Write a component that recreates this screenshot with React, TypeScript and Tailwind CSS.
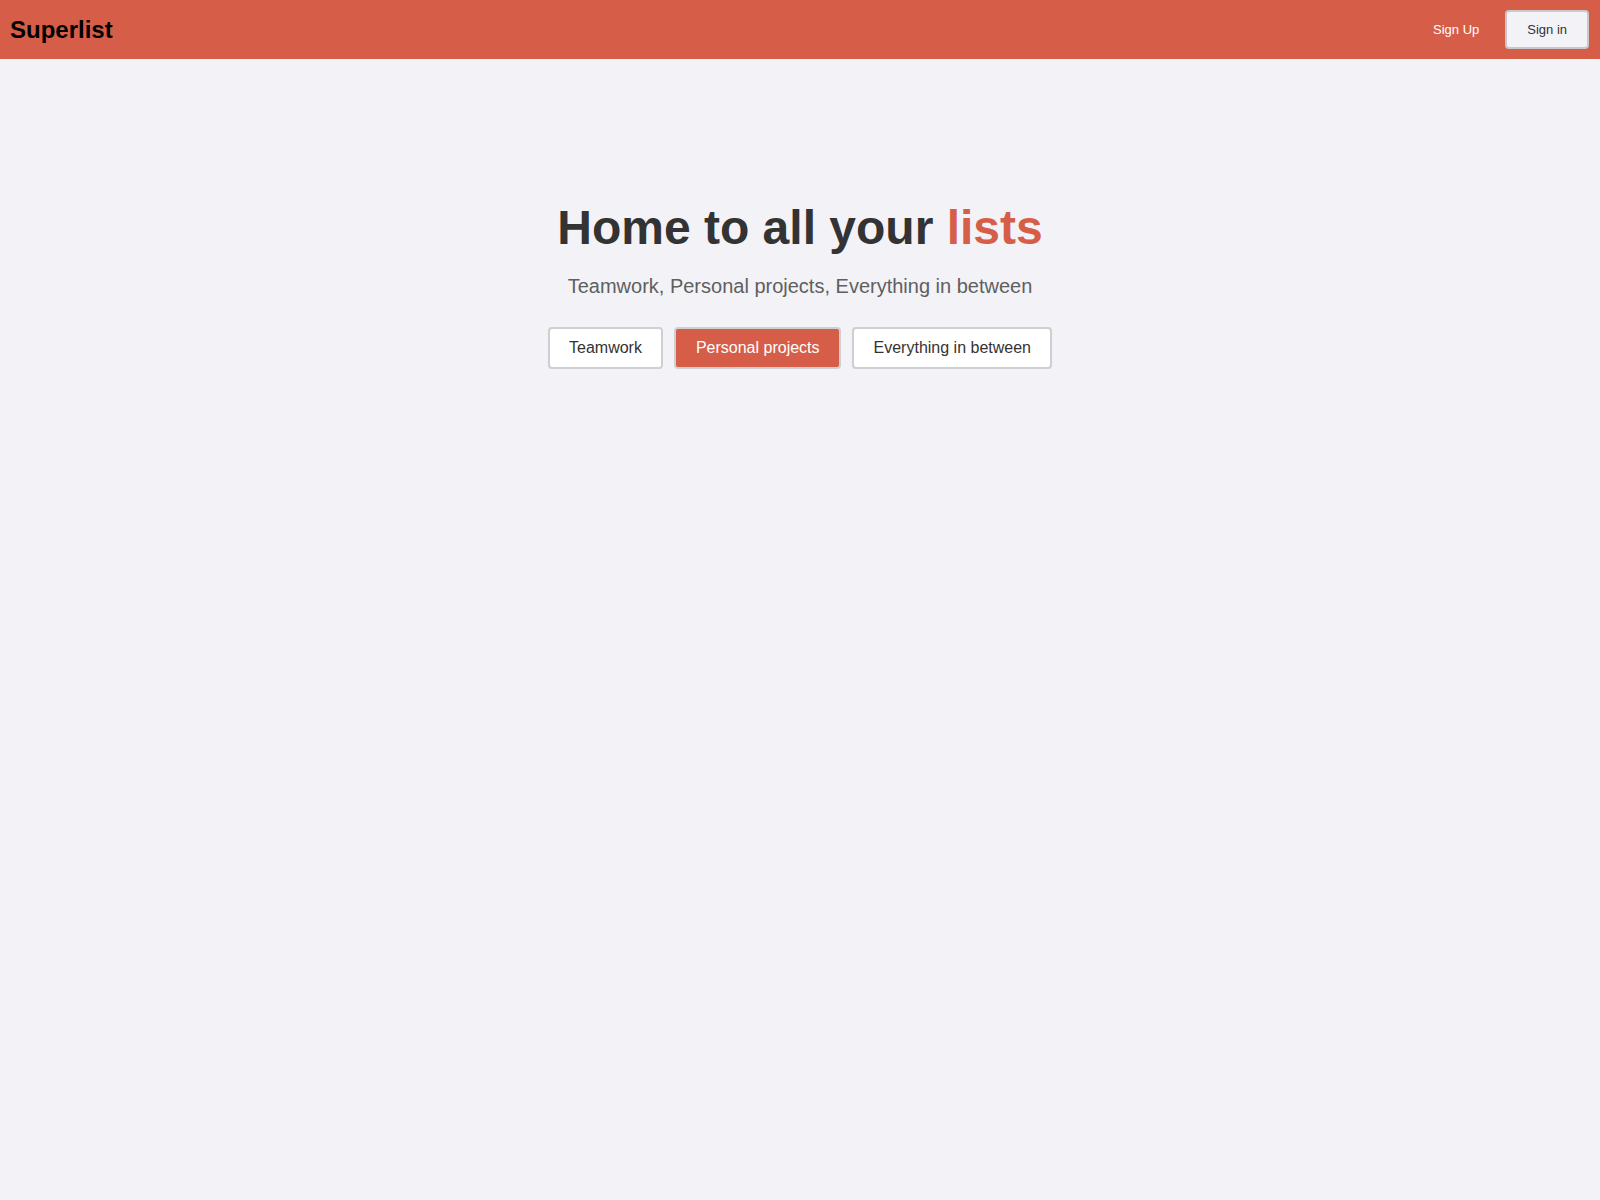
const options = ['Teamwork', 'Personal projects', 'Everything in between'];

const App = () => {
  const selected = 'Personal projects';

  return (
    <div className="min-h-screen bg-[#f2f2f7] font-['Liberation_Sans',Arial,sans-serif]">
      {/* Header */}
      <header className="h-[59px] bg-[#d65e48] flex items-center justify-between pl-[10px] pr-[11px]">
        <h1 className="text-[24px] leading-[28px] font-bold text-black">Superlist</h1>
        <div className="flex items-center">
          <button className="text-[13px] leading-[15px] text-white mr-[26px]">Sign Up</button>
          <button className="h-[39px] px-[20px] text-[13px] leading-[15px] text-[#333] bg-[#f2f2f7] border-2 border-[#c9c9cc] rounded-[4px]">
            Sign in
          </button>
        </div>
      </header>

      {/* Hero */}
      <main className="pt-[140px] flex flex-col items-center">
        <h2 className="text-[48px] leading-[57.6px] font-bold text-[#333]">
          Home to all your <span className="text-[#d65e48]">lists</span>
        </h2>
        <p className="mt-[15px] text-[20px] leading-[28px] text-[#5f5f5f]">
          Teamwork, Personal projects, Everything in between
        </p>
        <div className="mt-[27px] flex gap-[11px]">
          {options.map((option) => (
            <button
              key={option}
              className={`h-[42px] px-[19.5px] text-[16px] leading-[18px] border-2 border-[#cfcfd2] rounded-[4px] ${
                selected === option ? 'bg-[#d65e48] text-white' : 'bg-white text-[#333]'
              }`}
            >
              {option}
            </button>
          ))}
        </div>
      </main>
    </div>
  );
};

export default App;
